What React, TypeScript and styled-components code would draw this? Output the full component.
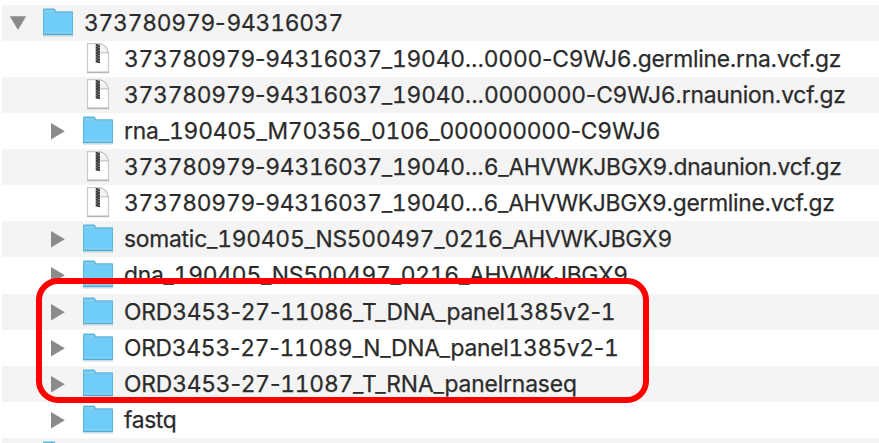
import React from 'react';
import styled, { createGlobalStyle } from 'styled-components';

const GlobalStyle = createGlobalStyle`
  html, body { margin: 0; background: #fff; overflow: hidden; }
`;
const Window = styled.main`
  position: relative;
  box-sizing: border-box;
  width: 879px;
  height: 443px;
  padding: 4.5px 0 0 2px;
  overflow: hidden;
  background: #fff;
`;
const Row = styled.div<{ $striped: boolean; $nested: boolean }>`
  display: flex;
  align-items: center;
  box-sizing: border-box;
  height: 36.13px;
  padding-left: ${(p) => (p.$nested ? 46 : 6)}px;
  background: ${(p) => (p.$striped ? '#f4f4f4' : '#fff')};
`;
const Disclosure = styled.svg`
  flex: none;
  width: 20px;
  height: 20px;
  margin-right: 14px;
`;
const Icon = styled.svg`
  flex: none;
  width: 32px;
  height: 34px;
  margin-right: 10px;
`;
const Name = styled.span<{ $tracking: number }>`
  font-family: Inter, sans-serif;
  font-size: 22.8px;
  font-weight: 420;
  line-height: 36px;
  white-space: pre;
  color: #2b2b2b;
  -webkit-text-stroke: 0.25px #2b2b2b;
  letter-spacing: ${(p) => p.$tracking}px;
`;
const Digits = styled.span`
  font-variant-numeric: tabular-nums;
  letter-spacing: -0.22px;
`;
const Highlight = styled.div`
  position: absolute;
  left: 36px;
  top: 278px;
  box-sizing: border-box;
  width: 613px;
  height: 125px;
  border: 6px solid #fe0000;
  border-radius: 22px;
`;

const Folder = () => (
  <Icon viewBox="0 1.2 32 34">
    <path d="M1 31.3h30" stroke="#99aabb" strokeOpacity=".35" strokeWidth="1.3" />
    <path d="M1 30V5q0-1.2 1.2-1.2h9.6q1 0 1.4 1l.8 1.7h16q1 0 1 1v22.5z" fill="#5bb5dc" />
    <path d="M2 7V5.2h9.8L13.2 7.8H30V9H2z" fill="#7fcdf0" />
    <path d="M2 9h28v19H2z" fill="#70cdfa" />
    <path d="M2 28.2h28" stroke="#9fdcf8" strokeWidth="1" />
    <path d="M1 29.8h30" stroke="#4faed6" strokeWidth="1.3" />
  </Icon>
);
const Archive = () => (
  <Icon viewBox="0 .8 32 34">
    <path d="M5.5 2.5h13l8 9v19.5h-21z" fill="#fff" stroke="#cacaca" strokeWidth="1.2" />
    <path d="M5 31.3h22" stroke="#b3b3b3" strokeWidth="1.4" />
    <path d="M18.5 2.6v8.9h8q-1.2-7.2-8-8.9z" fill="#f3f3f3" />
    <path d="M17.5 11.5h9q-1.6-7.4-8.5-8.9" fill="none" stroke="#bdbdbd" strokeWidth="1.1" />
    <path d="M15.8 3v18.6" stroke="#777777" strokeWidth="4" />
    <path d="M14.8 3v18.6" stroke="#303030" strokeWidth="2.1" strokeDasharray="1.6 1.1" />
    <path d="M16.9 4.2v17.6" stroke="#303030" strokeWidth="2.1" strokeDasharray="1.6 1.1" />
  </Icon>
);
const Triangle = ({ kind }: { kind: 'open' | 'closed' | 'none' }) => (
  <Disclosure viewBox="0 0 20 20">
    {kind === 'open' && <path d="M1.8 3.3h16.4L10 17z" fill="#8b8b8b" />}
    {kind === 'closed' && <path d="M3 1.9v16.7l13.8-8.4z" fill="#8b8b8b" />}
  </Disclosure>
);

type Entry = { name: string; kind: 'root' | 'folder' | 'archive'; tracking: number };
const entries: Entry[] = [
  { name: '373780979-94316037', kind: 'root', tracking: 0.9 },
  { name: '373780979-94316037_19040...0000-C9WJ6.germline.rna.vcf.gz', kind: 'archive', tracking: -0.24 },
  { name: '373780979-94316037_19040...0000000-C9WJ6.rnaunion.vcf.gz', kind: 'archive', tracking: -0.21 },
  { name: 'rna_190405_M70356_0106_000000000-C9WJ6', kind: 'folder', tracking: -0.15 },
  { name: '373780979-94316037_19040...6_AHVWKJBGX9.dnaunion.vcf.gz', kind: 'archive', tracking: -0.26 },
  { name: '373780979-94316037_19040...6_AHVWKJBGX9.germline.vcf.gz', kind: 'archive', tracking: -0.3 },
  { name: 'somatic_190405_NS500497_0216_AHVWKJBGX9', kind: 'folder', tracking: -0.22 },
  { name: 'dna_190405_NS500497_0216_AHVWKJBGX9', kind: 'folder', tracking: -0.26 },
  { name: 'ORD3453-27-11086_T_DNA_panel1385v2-1', kind: 'folder', tracking: -0.13 },
  { name: 'ORD3453-27-11089_N_DNA_panel1385v2-1', kind: 'folder', tracking: -0.27 },
  { name: 'ORD3453-27-11087_T_RNA_panelrnaseq', kind: 'folder', tracking: -0.14 },
  { name: 'fastq', kind: 'folder', tracking: -0.35 },
];

export default function App() {
  return (
    <Window>
      <GlobalStyle />
      {entries.map((e, i) => (
        <Row key={e.name} $striped={i % 2 === 0} $nested={e.kind !== 'root'}>
          <Triangle kind={e.kind === 'archive' ? 'none' : e.kind === 'root' ? 'open' : 'closed'} />
          {e.kind === 'archive' ? <Archive /> : <Folder />}
          <Name $tracking={e.tracking}>
            {e.name.split(/(\d+)/).map((part, j) => (j % 2 ? <Digits key={j}>{part}</Digits> : part))}
          </Name>
        </Row>
      ))}
      <Row $striped $nested={false}>
        <Triangle kind="none" />
        <Folder />
      </Row>
      <Highlight />
    </Window>
  );
}
